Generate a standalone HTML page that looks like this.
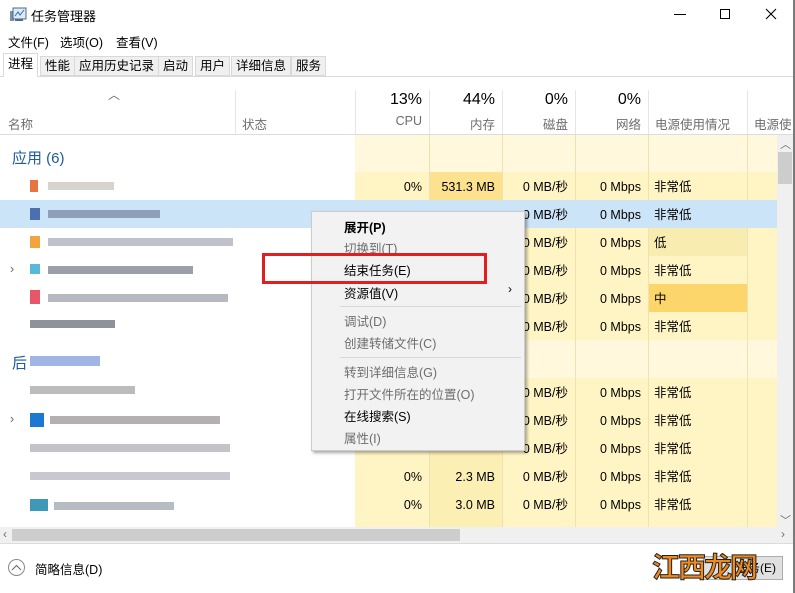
<!DOCTYPE html>
<html><head><meta charset="utf-8"><style>
*{margin:0;padding:0;box-sizing:border-box}
body{width:795px;height:593px;overflow:hidden;background:#fff;font-family:"Liberation Sans","Noto Sans CJK SC",sans-serif;font-size:12.5px;color:#000;position:relative}
.a{position:absolute;white-space:nowrap}
.r{text-align:right}
.g{color:#6d6d6d}
.tab{position:absolute;top:56px;height:20px;background:#f0f0f0;border:1px solid #d9d9d9;font-size:12.5px;line-height:18px;padding:0 4px}
.vl{position:absolute;width:1px;background:#e6e6e6}
.cell{position:absolute;height:28px;line-height:28px;font-size:12.5px}
.blk{position:absolute;height:8px}
.mi{position:absolute;left:344px;font-size:12.5px}
.dis{color:#6d6d6d}
</style></head><body>
<!-- title bar -->
<svg class="a" style="left:9px;top:7px" width="18" height="16"><rect x="1" y="4" width="4" height="10" fill="#7f8fa6"/><rect x="4" y="1" width="13" height="11" fill="#dfe9f3" stroke="#4a6b8a"/><polyline points="6,9 9,5 11,8 15,3" stroke="#2a6fb5" fill="none"/><rect x="6" y="12" width="8" height="2" fill="#4a6b8a"/></svg>
<div class="a" style="left:31px;top:6px;font-size:13px">任务管理器</div>
<div class="a" style="left:674px;top:14px;width:12px;height:1px;background:#000"></div>
<div class="a" style="left:720px;top:9px;width:10px;height:10px;border:1px solid #000"></div>
<svg class="a" style="left:765px;top:8px" width="12" height="12"><path d="M1 1L11 11M11 1L1 11" stroke="#000" stroke-width="1.1"/></svg>
<div class="a" style="left:793px;top:0;width:2px;height:593px;background:#7a7a7a"></div>
<!-- menu -->
<div class="a" style="left:8px;top:32px;font-size:12.5px">文件(F)</div>
<div class="a" style="left:60px;top:32px;font-size:12.5px">选项(O)</div>
<div class="a" style="left:116px;top:32px;font-size:12.5px">查看(V)</div>
<!-- tabs -->
<div class="a" style="left:0;top:76px;width:793px;height:1px;background:#d9d9d9"></div>
<div class="tab" style="left:3px;top:53px;height:24px;background:#fff;border-bottom:none;line-height:20px">进程</div>
<div class="tab" style="left:40px">性能</div>
<div class="tab" style="left:74px">应用历史记录</div>
<div class="tab" style="left:158px">启动</div>
<div class="tab" style="left:195px">用户</div>
<div class="tab" style="left:231px">详细信息</div>
<div class="tab" style="left:291px">服务</div>
<!-- header -->
<div class="a g" style="left:108px;top:86px;font-size:12px">︿</div>
<div class="a g" style="left:8px;top:114px">名称</div>
<div class="a g" style="left:242px;top:114px">状态</div>
<div class="a r" style="left:355px;width:67px;top:91px;font-size:16px">13%</div>
<div class="a r g" style="left:355px;width:67px;top:114px">CPU</div>
<div class="a r" style="left:429px;width:66px;top:91px;font-size:16px">44%</div>
<div class="a r g" style="left:429px;width:66px;top:114px">内存</div>
<div class="a r" style="left:502px;width:66px;top:91px;font-size:16px">0%</div>
<div class="a r g" style="left:502px;width:66px;top:114px">磁盘</div>
<div class="a r" style="left:575px;width:66px;top:91px;font-size:16px">0%</div>
<div class="a r g" style="left:575px;width:66px;top:114px">网络</div>
<div class="a g" style="left:655px;top:114px">电源使用情况</div>
<div class="a g" style="left:754px;top:114px">电源使</div>
<div class="vl" style="left:235px;top:90px;height:44px"></div>
<div class="vl" style="left:355px;top:90px;height:44px"></div>
<div class="vl" style="left:429px;top:90px;height:44px"></div>
<div class="vl" style="left:502px;top:90px;height:44px"></div>
<div class="vl" style="left:575px;top:90px;height:44px"></div>
<div class="vl" style="left:648px;top:90px;height:44px"></div>
<div class="vl" style="left:747px;top:90px;height:44px"></div>
<div class="a" style="left:0;top:134px;width:793px;height:1px;background:#dcdcdc"></div>
<!-- data background -->
<div class="a" style="left:355px;top:135px;width:422px;height:392px;background:#fff4c4"></div>
<div class="a" style="left:355px;top:135px;width:422px;height:37px;background:#fff8dc"></div>
<div class="a" style="left:355px;top:340px;width:422px;height:38px;background:#fff8dc"></div>
<div class="a" style="left:429px;top:172px;width:73px;height:168px;background:#fcefb4"></div>
<div class="a" style="left:429px;top:378px;width:73px;height:149px;background:#fcefb4"></div>
<div class="a" style="left:429px;top:172px;width:73px;height:28px;background:#fce28e"></div>
<div class="a" style="left:648px;top:228px;width:99px;height:28px;background:#f9ecb0"></div>
<div class="a" style="left:648px;top:284px;width:99px;height:28px;background:#fcd56b"></div>
<div class="vl" style="left:429px;top:135px;height:392px;background:#f0e2b0"></div>
<div class="vl" style="left:502px;top:135px;height:392px;background:#f0e2b0"></div>
<div class="vl" style="left:575px;top:135px;height:392px;background:#f0e2b0"></div>
<div class="vl" style="left:648px;top:135px;height:392px;background:#f0e2b0"></div>
<div class="vl" style="left:747px;top:135px;height:392px;background:#f0e2b0"></div>
<!-- selected row -->
<div class="a" style="left:0;top:200px;width:777px;height:28px;background:#cce4f7"></div>
<!-- group headers -->
<div class="a" style="left:12px;top:147px;font-size:15px;color:#1e5aa0">应用 (6)</div>
<div class="a" style="left:12px;top:352px;font-size:15px;color:#1e5aa0">后</div>
<div class="blk" style="left:30px;top:356px;width:70px;height:10px;background:#9fb6e4"></div>
<!-- name blurs -->
<div class="blk" style="left:30px;top:180px;width:8px;height:12px;background:#e8743f"></div><div class="blk" style="left:48px;top:182px;width:66px;background:#d6d2cc"></div>
<div class="blk" style="left:30px;top:208px;width:10px;height:12px;background:#4c6fb0"></div><div class="blk" style="left:48px;top:210px;width:112px;background:#8e9fb8"></div>
<div class="blk" style="left:30px;top:236px;width:10px;height:12px;background:#f2a43d"></div><div class="blk" style="left:48px;top:238px;width:185px;background:#bfc3c9"></div>
<div class="a g" style="left:10px;top:262px">›</div>
<div class="blk" style="left:30px;top:264px;width:10px;height:10px;background:#59b9d9"></div><div class="blk" style="left:48px;top:266px;width:145px;background:#9aa0aa"></div>
<div class="blk" style="left:30px;top:290px;width:10px;height:14px;background:#e8566a"></div><div class="blk" style="left:48px;top:294px;width:180px;background:#b7b9c1"></div>
<div class="blk" style="left:30px;top:320px;width:85px;background:#8d929c"></div>
<div class="blk" style="left:30px;top:386px;width:105px;background:#bcbcbc"></div>
<div class="a g" style="left:10px;top:412px">›</div>
<div class="blk" style="left:30px;top:413px;width:14px;height:14px;background:#1e78d2"></div><div class="blk" style="left:50px;top:416px;width:170px;background:#b5b0b0"></div>
<div class="blk" style="left:30px;top:444px;width:200px;background:#c2c4c8"></div>
<div class="blk" style="left:30px;top:472px;width:200px;background:#c7c9cf"></div>
<div class="blk" style="left:30px;top:499px;width:18px;height:12px;background:#3f98b8"></div><div class="blk" style="left:54px;top:502px;width:120px;background:#b7bcc3"></div>
<!-- data text -->
<div class="cell r" style="left:355px;width:67px;top:173px">0%</div>
<div class="cell r" style="left:429px;width:66px;top:173px">531.3 MB</div>
<div class="cell r" style="left:502px;width:66px;top:173px">0 MB/秒</div>
<div class="cell r" style="left:575px;width:66px;top:173px">0 Mbps</div>
<div class="cell" style="left:654px;top:173px">非常低</div>
<div class="cell r" style="left:502px;width:66px;top:201px">0 MB/秒</div><div class="cell r" style="left:575px;width:66px;top:201px">0 Mbps</div><div class="cell" style="left:654px;top:201px">非常低</div>
<div class="cell r" style="left:502px;width:66px;top:229px">0 MB/秒</div><div class="cell r" style="left:575px;width:66px;top:229px">0 Mbps</div><div class="cell" style="left:654px;top:229px">低</div>
<div class="cell r" style="left:502px;width:66px;top:257px">0 MB/秒</div><div class="cell r" style="left:575px;width:66px;top:257px">0 Mbps</div><div class="cell" style="left:654px;top:257px">非常低</div>
<div class="cell r" style="left:502px;width:66px;top:285px">0 MB/秒</div><div class="cell r" style="left:575px;width:66px;top:285px">0 Mbps</div><div class="cell" style="left:654px;top:285px">中</div>
<div class="cell r" style="left:502px;width:66px;top:313px">0 MB/秒</div><div class="cell r" style="left:575px;width:66px;top:313px">0 Mbps</div><div class="cell" style="left:654px;top:313px">非常低</div>
<div class="cell r" style="left:502px;width:66px;top:379px">0 MB/秒</div><div class="cell r" style="left:575px;width:66px;top:379px">0 Mbps</div><div class="cell" style="left:654px;top:379px">非常低</div>
<div class="cell r" style="left:502px;width:66px;top:407px">0 MB/秒</div><div class="cell r" style="left:575px;width:66px;top:407px">0 Mbps</div><div class="cell" style="left:654px;top:407px">非常低</div>
<div class="cell r" style="left:502px;width:66px;top:435px">0 MB/秒</div><div class="cell r" style="left:575px;width:66px;top:435px">0 Mbps</div><div class="cell" style="left:654px;top:435px">非常低</div>
<div class="cell r" style="left:355px;width:67px;top:463px">0%</div><div class="cell r" style="left:429px;width:66px;top:463px">2.3 MB</div><div class="cell r" style="left:502px;width:66px;top:463px">0 MB/秒</div><div class="cell r" style="left:575px;width:66px;top:463px">0 Mbps</div><div class="cell" style="left:654px;top:463px">非常低</div>
<div class="cell r" style="left:355px;width:67px;top:491px">0%</div><div class="cell r" style="left:429px;width:66px;top:491px">3.0 MB</div><div class="cell r" style="left:502px;width:66px;top:491px">0 MB/秒</div><div class="cell r" style="left:575px;width:66px;top:491px">0 Mbps</div><div class="cell" style="left:654px;top:491px">非常低</div>
<!-- vertical scrollbar -->
<div class="a" style="left:777px;top:135px;width:16px;height:392px;background:#f0f0f0"></div>
<div class="a g" style="left:780px;top:136px;font-size:11px">︿</div>
<div class="a" style="left:778px;top:152px;width:14px;height:32px;background:#cdcdcd"></div>
<div class="a g" style="left:780px;top:512px;font-size:11px">﹀</div>
<!-- horizontal scrollbar -->
<div class="a" style="left:0;top:527px;width:793px;height:16px;background:#f0f0f0"></div>
<div class="a" style="left:12px;top:529px;width:448px;height:12px;background:#cdcdcd"></div>
<div class="a g" style="left:3px;top:527px;font-size:12px">‹</div>
<div class="a g" style="left:781px;top:527px;font-size:12px">›</div>
<div class="a" style="left:0;top:543px;width:793px;height:1px;background:#dcdcdc"></div>
<!-- footer -->
<div class="a" style="left:8px;top:559px;width:17px;height:17px;border:1px solid #888;border-radius:50%"></div>
<svg class="a" style="left:11px;top:564px" width="11" height="7"><path d="M1 6L5.5 1.5L10 6" stroke="#666" fill="none"/></svg>
<div class="a" style="left:35px;top:559px;font-size:12.5px">简略信息(D)</div>
<div class="a" style="left:703px;top:556px;width:80px;height:24px;background:#e1e1e1;border:1px solid #adadad;font-size:12px;line-height:22px;text-align:right;padding-right:6px">任务(E)</div>
<div class="a" style="left:652px;top:546px;font-size:28px;font-weight:bold;color:#f08a1c;-webkit-text-stroke:1px #222;letter-spacing:-2px">江西龙网</div>
<!-- context menu -->
<div class="a" style="left:311px;top:211px;width:214px;height:240px;background:#f2f2f2;border:1px solid #cccccc;box-shadow:2px 2px 3px rgba(0,0,0,.35)"></div>
<div class="mi" style="top:217px;font-weight:bold">展开(P)</div>
<div class="mi dis" style="top:238px">切换到(T)</div>
<div class="mi" style="top:260px">结束任务(E)</div>
<div class="mi" style="top:283px">资源值(V)</div>
<div class="a" style="left:508px;top:282px;font-size:12px">›</div>
<div class="a" style="left:340px;top:306px;width:181px;height:1px;background:#d7d7d7"></div>
<div class="mi dis" style="top:311px">调试(D)</div>
<div class="mi dis" style="top:333px">创建转储文件(C)</div>
<div class="a" style="left:340px;top:357px;width:181px;height:1px;background:#d7d7d7"></div>
<div class="mi dis" style="top:362px">转到详细信息(G)</div>
<div class="mi dis" style="top:384px">打开文件所在的位置(O)</div>
<div class="mi" style="top:406px">在线搜索(S)</div>
<div class="mi dis" style="top:428px">属性(I)</div>
<!-- red box -->
<div class="a" style="left:262px;top:253px;width:225px;height:31px;border:3px solid #e02020"></div>
</body></html>
